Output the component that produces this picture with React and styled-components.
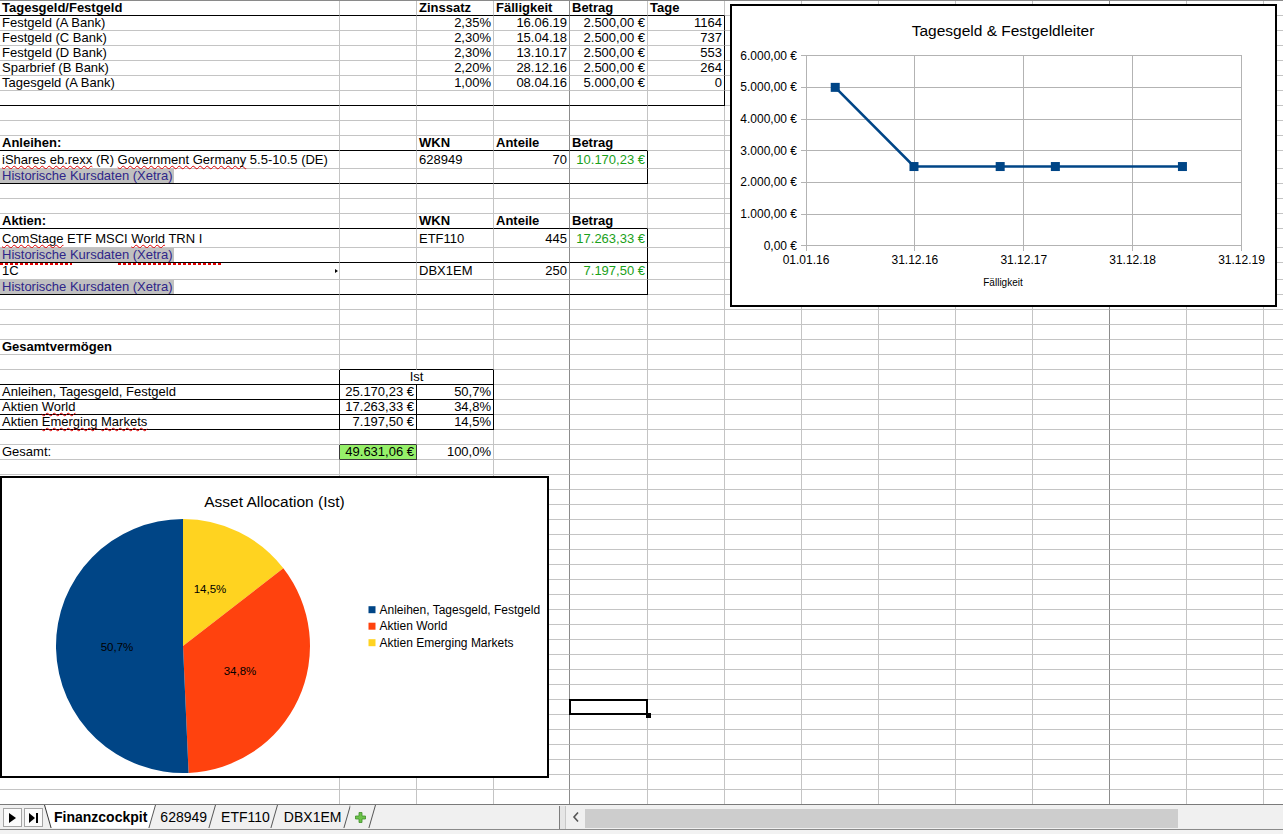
import React from 'react';
import styled, { createGlobalStyle, css } from 'styled-components';

const GlobalStyle = createGlobalStyle`
  html, body {
    margin: 0;
    padding: 0;
    background: #fff;
  }
  body {
    font-family: "Liberation Sans", Arial, sans-serif;
  }
`;

const COLS = [340, 77, 77, 76, 78, 77, 77, 77, 77, 77, 77, 77, 77, 77];
const ROWS = [
  15, 15, 15, 15, 15, 15, 15, 15, 15, 15, 18, 15, 15, 15, 15, 19, 15, 17, 15,
  ...Array(34).fill(15),
];

const GRID = '#c4c4c4';
const BREAK = '#8c8c8c';
const BLACK = '#000';
const DARK = '#3a3a3a';
const GREEN = '#1aa01a';

const range = (a, b) => Array.from({ length: b - a + 1 }, (_, i) => a + i);

// cell borders that differ from the grid
const bottom = {};
const right = {};
const mark = (target, rows, cols, color = BLACK) =>
  rows.forEach(r => cols.forEach(c => (target[`${r}-${c}`] = color)));

mark(bottom, [0, 6], range(0, 5));
mark(right, range(1, 6), [5]);
mark(bottom, [9, 11, 14, 16, 18], range(0, 4));
mark(right, [10, 11, 15, 16, 17, 18], [4]);
mark(bottom, [23], [1, 2]);
mark(bottom, range(24, 27), range(0, 2));
mark(right, range(24, 27), [0, 2]);
mark(right, range(25, 27), [1]);
mark(bottom, [28], [1], DARK);
mark(right, [29], [0, 1], DARK);
mark(bottom, [29], [1], DARK);

const Spell = styled.span`
  text-decoration: underline wavy #e00000;
  text-decoration-thickness: 1px;
  text-underline-offset: 1px;
  text-decoration-skip-ink: none;
`;

const Link = styled.span`
  display: inline-block;
  height: 14px;
  line-height: 14px;
  padding: 0 1px 0 2px;
  background: #c0c0c0;
  color: #2f2689;
`;

const CELLS = {
  '0-0': { text: 'Tagesgeld/Festgeld', bold: true },
  '0-2': { text: 'Zinssatz', bold: true },
  '0-3': { text: 'Fälligkeit', bold: true },
  '0-4': { text: 'Betrag', bold: true },
  '0-5': { text: 'Tage', bold: true },
  '9-0': { text: 'Anleihen:', bold: true },
  '9-2': { text: 'WKN', bold: true },
  '9-3': { text: 'Anteile', bold: true },
  '9-4': { text: 'Betrag', bold: true },
  '10-0': {
    text: (
      <>
        <Spell>iShares eb.rexx</Spell> (R) <Spell>Government Germany</Spell> 5.5-10.5 (DE)
      </>
    ),
  },
  '10-2': { text: '628949' },
  '10-3': { text: '70', align: 'right' },
  '10-4': { text: '10.170,23 €', align: 'right', color: GREEN },
  '11-0': { link: true },
  '14-0': { text: 'Aktien:', bold: true },
  '14-2': { text: 'WKN', bold: true },
  '14-3': { text: 'Anteile', bold: true },
  '14-4': { text: 'Betrag', bold: true },
  '15-0': {
    text: (
      <>
        <Spell>ComStage</Spell> ETF MSCI <Spell>World</Spell> TRN I
      </>
    ),
  },
  '15-2': { text: 'ETF110' },
  '15-3': { text: '445', align: 'right' },
  '15-4': { text: '17.263,33 €', align: 'right', color: GREEN },
  '16-0': { link: true },
  '17-0': { text: '1C', clipped: true },
  '17-2': { text: 'DBX1EM' },
  '17-3': { text: '250', align: 'right' },
  '17-4': { text: '7.197,50 €', align: 'right', color: GREEN },
  '18-0': { link: true },
  '22-0': { text: 'Gesamtvermögen', bold: true },
  '24-1': { text: 'Ist', align: 'center', span: 2 },
  '25-0': { text: 'Anleihen, Tagesgeld, Festgeld' },
  '25-1': { text: '25.170,23 €', align: 'right' },
  '25-2': { text: '50,7%', align: 'right' },
  '26-0': { text: <>Aktien <Spell>World</Spell></> },
  '26-1': { text: '17.263,33 €', align: 'right' },
  '26-2': { text: '34,8%', align: 'right' },
  '27-0': { text: <>Aktien <Spell>Emerging</Spell> <Spell>Markets</Spell></> },
  '27-1': { text: '7.197,50 €', align: 'right' },
  '27-2': { text: '14,5%', align: 'right' },
  '29-0': { text: 'Gesamt:' },
  '29-1': { text: '49.631,06 €', align: 'right', bg: '#96f06a' },
  '29-2': { text: '100,0%', align: 'right' },
  '46-4': { selected: true },
};

const fixedDeposits = [
  ['Festgeld (A Bank)', '2,35%', '16.06.19', '2.500,00 €', '1164'],
  ['Festgeld (C Bank)', '2,30%', '15.04.18', '2.500,00 €', '737'],
  ['Festgeld (D Bank)', '2,30%', '13.10.17', '2.500,00 €', '553'],
  ['Sparbrief (B Bank)', '2,20%', '28.12.16', '2.500,00 €', '264'],
  ['Tagesgeld (A Bank)', '1,00%', '08.04.16', '5.000,00 €', '0'],
];
fixedDeposits.forEach(([name, ...values], i) => {
  CELLS[`${i + 1}-0`] = { text: name };
  values.forEach((v, j) => (CELLS[`${i + 1}-${j + 2}`] = { text: v, align: 'right' }));
});

const justify = { left: 'flex-start', right: 'flex-end', center: 'center' };

const Page = styled.div`
  position: relative;
  width: 1283px;
  height: 834px;
  overflow: hidden;
  display: flex;
  flex-direction: column;
`;

const Sheet = styled.div`
  display: grid;
  grid-template-columns: ${COLS.map(w => `${w}px`).join(' ')};
  grid-template-rows: ${ROWS.map(h => `${h}px`).join(' ')};
  flex: none;
  height: 804px;
  box-sizing: border-box;
  border-top: 1px solid #8a8a8a;
  overflow: hidden;
`;

const Cell = styled.div`
  grid-column: span ${p => p.$span};
  display: flex;
  align-items: flex-end;
  justify-content: ${p => justify[p.$align]};
  box-sizing: border-box;
  min-width: 0;
  padding: 0 2px ${p => (p.$tall ? '1px' : '0')};
  border-right: 1px solid ${p => p.$br};
  border-bottom: 1px solid ${p => p.$bb};
  background: ${p => p.$bg || 'transparent'};
  color: ${p => p.$color || '#000'};
  font-size: 13px;
  line-height: 14px;
  font-weight: ${p => (p.$bold ? 700 : 400)};
  white-space: nowrap;
  ${p => p.$link && css`padding-left: 0;`}
  ${p => p.$marked && css`position: relative;`}
`;

const CellText = styled.span`
  display: block;
  white-space: pre;
`;

const ClipArrow = styled.span`
  position: absolute;
  right: 1px;
  top: 6px;
  border-left: 3px solid #000;
  border-top: 2px solid transparent;
  border-bottom: 2px solid transparent;
`;

const SpellDash = styled.span`
  position: absolute;
  top: 0;
  left: ${p => p.$x}px;
  width: ${p => p.$w}px;
  height: 2px;
  background: repeating-linear-gradient(90deg, #e00000 0 3px, transparent 3px 5px);
`;

const Cursor = styled.span`
  position: absolute;
  left: -1px;
  top: -1px;
  right: -1px;
  bottom: -1px;
  border: 2px solid #000;
  &::after {
    content: '';
    position: absolute;
    right: -5px;
    bottom: -5px;
    width: 5px;
    height: 5px;
    background: #000;
  }
`;

const ChartFrame = styled.div`
  position: absolute;
  left: ${p => p.$x}px;
  top: ${p => p.$y}px;
  width: ${p => p.$w}px;
  height: ${p => p.$h}px;
  box-sizing: border-box;
  border: 2px solid #000;
  background: #fff;
  svg {
    display: block;
    width: 100%;
    height: 100%;
  }
`;

const TabBar = styled.div`
  display: flex;
  align-items: flex-start;
  flex: none;
  height: 26px;
  box-sizing: border-box;
  border-top: 1px solid #7a7a7a;
  border-bottom: 1px solid #8a8a8a;
  background: #f0f0f0;
`;

const NavGroup = styled.div`
  display: flex;
  gap: 2px;
  padding: 3px 0 0 3px;
`;

const NavButton = styled.div`
  display: flex;
  align-items: center;
  justify-content: center;
  width: 19px;
  height: 19px;
  box-sizing: border-box;
  border: 1px solid #a5a5a5;
  background: #fbfbfb;
`;

const Tabs = styled.div`
  display: flex;
  margin-left: 1px;
`;

const TabItem = styled.div`
  position: relative;
  z-index: ${p => (p.$active ? 2 : 1)};
  display: flex;
  align-items: center;
  height: 22px;
  padding: ${p => (p.$active ? '1px 9px 0 10px' : '1px 9px 0 5px')};
  margin-right: ${p => (p.$active ? '-1px' : '0')};
  font-size: 14px;
  font-weight: ${p => (p.$active ? 700 : 400)};
  color: #000;
  &::before,
  &::after {
    content: '';
    position: absolute;
    top: 0;
    bottom: 0;
    z-index: -1;
    background: ${p => (p.$active ? '#fff' : '#f0f0f0')};
  }
  &::before {
    left: 0;
    right: 50%;
    transform-origin: top left;
    transform: skewX(16deg);
    border-left: 1px solid ${p => (p.$active ? '#333' : 'transparent')};
  }
  &::after {
    left: 50%;
    right: 0;
    transform-origin: top right;
    transform: skewX(-16deg);
    border-right: 1px solid #555;
  }
`;

const Spacer = styled.div`
  flex: 1;
`;

const Splitter = styled.div`
  flex: none;
  width: 5px;
  height: 23px;
  margin-top: 1px;
  border-left: 1px solid #7d7d7d;
  border-right: 1px solid #c8c8c8;
  background: #e6e6e6;
`;

const ScrollArrow = styled.div`
  display: flex;
  flex: none;
  align-items: center;
  justify-content: center;
  width: 19px;
  height: 24px;
`;

const Thumb = styled.div`
  flex: none;
  width: 593px;
  height: 19px;
  margin-top: 4px;
  background: #cdcdcd;
`;

const Track = styled.div`
  flex: none;
  width: 105px;
`;

const StatusStrip = styled.div`
  flex: 1;
  background: #f2f2f2;
`;

/* ---------- line chart ---------- */

const LX0 = 806;
const LX1 = 1241.5;
const LY0 = 245.7;
const LY1 = 55.7;
const yOf = v => LY0 - (v / 6000) * (LY0 - LY1);
const xOf = d => LX0 + (d / 1460) * (LX1 - LX0);

const ladder = [
  { day: 98, value: 5000 },
  { day: 362, value: 2500 },
  { day: 651, value: 2500 },
  { day: 836, value: 2500 },
  { day: 1262, value: 2500 },
];
const yTicks = [0, 1000, 2000, 3000, 4000, 5000, 6000];
const xTicks = ['01.01.16', '31.12.16', '31.12.17', '31.12.18', '31.12.19'];
const euro = v => (v === 0 ? '0,00 €' : `${v / 1000}.000,00 €`);

const LineChart = () => (
  <ChartFrame $x={730} $y={4} $w={547} $h={303}>
    <svg viewBox="732 6 543 299" fontFamily="Liberation Sans, Arial, sans-serif">
      <text x="1003" y="35.5" fontSize="15.5" textAnchor="middle" fill="#000">
        Tagesgeld &amp; Festgeldleiter
      </text>
      <g stroke="#b3b3b3" strokeWidth="1" shapeRendering="crispEdges">
        {yTicks.map(v => (
          <line key={v} x1={LX0 - 5} x2={LX1} y1={yOf(v)} y2={yOf(v)} />
        ))}
        {xTicks.map((t, i) => {
          const x = LX0 + (i * (LX1 - LX0)) / 4;
          return <line key={t} x1={x} x2={x} y1={LY1} y2={LY0 + 5} />;
        })}
      </g>
      <g fontSize="12" fill="#000">
        {yTicks.map(v => (
          <text key={v} x="797" y={yOf(v) + 4} textAnchor="end">
            {euro(v)}
          </text>
        ))}
        {xTicks.map((t, i) => (
          <text key={t} x={LX0 + (i * (LX1 - LX0)) / 4} y="264" textAnchor="middle">
            {t}
          </text>
        ))}
      </g>
      <text x="1003" y="286" fontSize="10" textAnchor="middle" fill="#000">
        Fälligkeit
      </text>
      <polyline
        points={ladder.map(p => `${xOf(p.day)},${yOf(p.value)}`).join(' ')}
        fill="none"
        stroke="#004586"
        strokeWidth="2.6"
      />
      {ladder.map(p => (
        <rect key={p.day} x={xOf(p.day) - 4.5} y={yOf(p.value) - 4.5} width="9" height="9" fill="#004586" />
      ))}
    </svg>
  </ChartFrame>
);

/* ---------- pie chart ---------- */

const PCX = 183;
const PCY = 646;
const PR = 127;
const polar = deg => {
  const a = (deg * Math.PI) / 180;
  return [PCX + PR * Math.sin(a), PCY - PR * Math.cos(a)];
};
const slicePath = (from, to) => {
  const [x0, y0] = polar(from);
  const [x1, y1] = polar(to);
  const large = to - from > 180 ? 1 : 0;
  return `M${PCX} ${PCY} L${x0} ${y0} A${PR} ${PR} 0 ${large} 1 ${x1} ${y1} Z`;
};

const allocation = [
  { name: 'Anleihen, Tagesgeld, Festgeld', share: 50.7, color: '#004586', label: [117, 647] },
  { name: 'Aktien World', share: 34.8, color: '#ff420e', label: [240, 671] },
  { name: 'Aktien Emerging Markets', share: 14.5, color: '#ffd320', label: [210, 589] },
];
// drawn clockwise from 12 o'clock: yellow, red, blue
const pieOrder = [2, 1, 0];

const PieChart = () => {
  let start = 0;
  const slices = pieOrder.map(i => {
    const s = allocation[i];
    const from = start;
    start += (s.share / 100) * 360;
    return { ...s, from, to: start };
  });

  return (
    <ChartFrame $x={0} $y={476} $w={549} $h={302}>
      <svg viewBox="2 478 545 298" fontFamily="Liberation Sans, Arial, sans-serif">
        <text x="274.5" y="506.5" fontSize="15.5" textAnchor="middle" fill="#000">
          Asset Allocation (Ist)
        </text>
        {slices.map(s => (
          <path key={s.name} d={slicePath(s.from, s.to)} fill={s.color} />
        ))}
        {slices.map(s => (
          <text key={s.name} x={s.label[0]} y={s.label[1] + 4} fontSize="11.5" textAnchor="middle" fill="#000">
            {s.share.toFixed(1).replace('.', ',')}%
          </text>
        ))}
        {allocation.map((s, i) => {
          const cy = 609.7 + i * 16.5;
          return (
            <g key={s.name}>
              <rect x="368.5" y={cy - 3.5} width="7" height="7" fill={s.color} />
              <text x="379.5" y={cy + 4.2} fontSize="12" fill="#000">
                {s.name}
              </text>
            </g>
          );
        })}
      </svg>
    </ChartFrame>
  );
};

/* ---------- sheet ---------- */

const SheetGrid = () => {
  const items = [];
  ROWS.forEach((height, r) => {
    let skip = 0;
    COLS.forEach((__, c) => {
      if (skip > 0) {
        skip -= 1;
        return;
      }
      const key = `${r}-${c}`;
      const cell = CELLS[key] || {};
      const span = cell.span || 1;
      skip = span - 1;
      const lastCol = c + span - 1;
      const br = right[`${r}-${lastCol}`] || (lastCol === 3 || lastCol === 10 ? BREAK : GRID);
      const bb = bottom[key] || GRID;
      items.push(
        <Cell
          key={key}
          $span={span}
          $align={cell.align || 'left'}
          $bold={cell.bold}
          $color={cell.color}
          $bg={cell.bg}
          $br={br}
          $bb={bb}
          $tall={height > 15}
          $link={cell.link}
          $marked={cell.clipped || cell.selected}
        >
          {cell.link ? (
            <Link>Historische Kursdaten (Xetra)</Link>
          ) : (
            cell.text && <CellText>{cell.text}</CellText>
          )}
          {cell.clipped && (
            <>
              <SpellDash $x={0} $w={72} />
              <SpellDash $x={118} $w={104} />
              <ClipArrow />
            </>
          )}
          {cell.selected && <Cursor />}
        </Cell>
      );
    });
  });
  return <Sheet>{items}</Sheet>;
};

const PlayIcon = ({ end }) => (
  <svg width="11" height="12" viewBox="0 0 11 12">
    <path d={end ? 'M1 1 L7 6 L1 11 Z' : 'M2 1 L9 6 L2 11 Z'} fill="#000" />
    {end && <rect x="8" y="1" width="2" height="10" fill="#000" />}
  </svg>
);

const PlusIcon = () => (
  <svg width="11" height="11" viewBox="0 0 11 11">
    <path
      d="M4 0.5 H7 V4 H10.5 V7 H7 V10.5 H4 V7 H0.5 V4 H4 Z"
      fill="#6cc24a"
      stroke="#3f8f2a"
      strokeWidth="0.8"
    />
  </svg>
);

const sheets = ['Finanzcockpit', '628949', 'ETF110', 'DBX1EM'];

const App = () => (
  <>
    <GlobalStyle />
    <Page>
      <SheetGrid />
      <TabBar>
        <NavGroup>
          <NavButton>
            <PlayIcon />
          </NavButton>
          <NavButton>
            <PlayIcon end />
          </NavButton>
        </NavGroup>
        <Tabs>
          {sheets.map((name, i) => (
            <TabItem key={name} $active={i === 0}>
              {name}
            </TabItem>
          ))}
          <TabItem>
            <PlusIcon />
          </TabItem>
        </Tabs>
        <Spacer />
        <Splitter />
        <ScrollArrow>
          <svg width="8" height="12" viewBox="0 0 8 12">
            <path d="M6 1.5 L2 6 L6 10.5" fill="none" stroke="#555" strokeWidth="1.6" />
          </svg>
        </ScrollArrow>
        <Thumb />
        <Track />
      </TabBar>
      <StatusStrip />
      <LineChart />
      <PieChart />
    </Page>
  </>
);

export default App;
